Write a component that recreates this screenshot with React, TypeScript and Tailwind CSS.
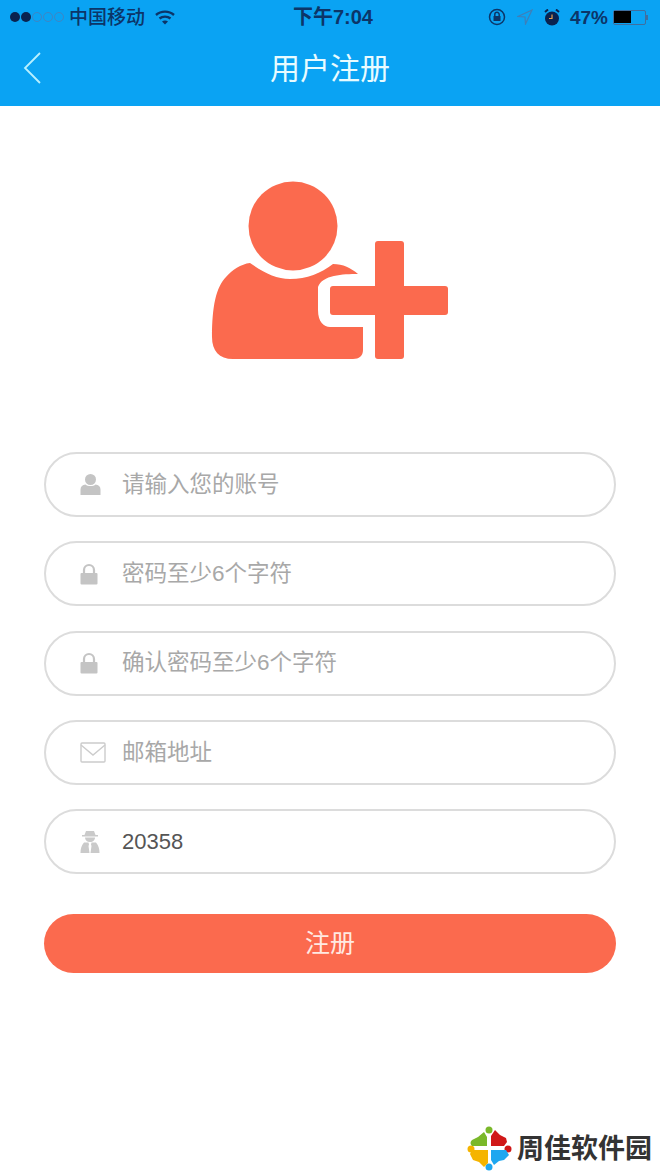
import React from "react";

const cjk = "font-['Liberation_Sans','Noto_Sans_CJK_SC',sans-serif]";

function UserIcon() {
  return (
    <svg width="21" height="23" viewBox="0 0 21 23" fill="#c4c4c4">
      <circle cx="10.500" cy="6.500" r="5.500" />
      <path d="M0.500 22v-5.500c0-3 2-4.500 5-5 2 2 8 2 10 0 3 .5 5 2 5 5v5.500z" />
    </svg>
  );
}
function LockIcon() {
  return (
    <svg width="18" height="22" viewBox="0 0 18 22">
      <path d="M4 11V7a5 5 0 0 1 10 0v4" fill="none" stroke="#c4c4c4" strokeWidth="2.200" />
      <rect x="0.500" y="10" width="17" height="11.500" rx="1" fill="#c4c4c4" />
    </svg>
  );
}
function MailIcon() {
  return (
    <svg width="26" height="21" viewBox="0 0 26 21" fill="none" stroke="#cccccc" strokeWidth="1.400">
      <rect x="1" y="1" width="24" height="19" rx="1" />
      <path d="M1 3l12 10L25 3" />
    </svg>
  );
}
function SpyIcon() {
  return (
    <svg width="20" height="24" viewBox="0 0 20 24" fill="#cacaca">
      <path d="M6 1h8l1.500 4H18v1.500H2V5h2.500z" />
      <path d="M5 7.500h10c0 2.500-2 4.500-5 4.500s-5-2-5-4.500z" />
      <path d="M4 12.500h4.500l.5 2-.5 1.500 1 7H0.500c0-4 1-8 3.500-10.500zM11.500 12.500H16c2.500 2.500 3.500 6.500 3.500 10.500h-9l1-7-.5-1.500z" />
    </svg>
  );
}

function Field({ icon, text, value }: { icon: React.ReactNode; text: string; value?: boolean }) {
  return (
    <div className="h-[65px] rounded-full border-2 border-[#dcdcdc] flex items-center bg-white">
      <div className="w-[76px] pl-[34px] flex items-center shrink-0">{icon}</div>
      <span className={`${value ? "text-[22px] text-[#555555]" : "text-[22.500px] text-[#a8a8a8] pt-[1px]"} leading-none ${cjk}`}>{text}</span>
    </div>
  );
}

function Logo() {
  return (
    <svg width="46" height="46" viewBox="466 1126 46 46">
      <circle cx="489" cy="1130" r="3.500" fill="#7ab82a" />
      <circle cx="471" cy="1149" r="3.500" fill="#f5b400" />
      <circle cx="508" cy="1149" r="3.500" fill="#d01818" />
      <circle cx="489" cy="1167" r="3.500" fill="#1ea7f0" />
      <path d="M487 1146H472c-2-2-2-4 0-6l6-3 6-5 3 5z" fill="#7ab82a" />
      <path d="M491 1146v-10l4-6 5 5 6 3 1 4-3 4z" fill="#d01818" />
      <path d="M488 1150H472l-2 4 3 6 6 2 5 5 4-4z" fill="#f5b400" />
      <path d="M491 1150h15l3 5-5 5-5 1-5 4-3-5z" fill="#1ea7f0" />
    </svg>
  );
}

function Dot({ on }: { on?: boolean }) {
  return <span className={`w-[10px] h-[10px] rounded-full ${on ? "bg-[#0a2350]" : "border border-[#3f86c4]"}`} />;
}

export default function App() {
  return (
    <div className={`w-[660px] h-[1174px] bg-white flex flex-col overflow-hidden ${cjk}`}>
      <header className="h-[106px] bg-[#0aa3f3] shrink-0 flex flex-col">
        <div className="h-[34px] grid grid-cols-3 items-center text-[#0c3568] px-[10px]">
          <div className="flex items-center">
            <div className="flex items-center gap-[1px] mr-[5px]">
              <Dot on />
              <Dot on />
              <Dot />
              <Dot />
              <Dot />
            </div>
            <span className="text-[19px] leading-none whitespace-nowrap font-medium">中国移动</span>
            <svg className="ml-[10px]" width="20" height="15" viewBox="0 0 20 15" fill="none" stroke="#0c3568" strokeWidth="2.400">
              <path d="M1 5c5-4.500 13-4.500 18 0" />
              <path d="M4.500 8.500c3-2.500 8-2.500 11 0" />
              <path d="M10 14.500l-3-3c1.500-1.200 4.500-1.200 6 0z" fill="#0c3568" stroke="none" />
            </svg>
          </div>
          <div className="text-center text-[20px] leading-none font-bold whitespace-nowrap pl-[6px]">下午7:04</div>
          <div className="flex items-center justify-end pr-[2px]">
            <svg width="18" height="18" viewBox="0 0 18 18" fill="none" stroke="#0c3568" strokeWidth="1.500" className="mr-[11px]">
              <circle cx="9" cy="9" r="7.500" />
              <rect x="5.500" y="8" width="7" height="5" fill="#0c3568" stroke="none" />
              <path d="M6.800 8V6.500a2.200 2.200 0 0 1 4.400 0V8" />
            </svg>
            <svg width="16" height="16" viewBox="0 0 16 16" fill="none" stroke="#3f7fb8" strokeWidth="1.200" className="mr-[11px]">
              <path d="M15 1L1 7.500l7 .5.500 7z" />
            </svg>
            <svg width="16" height="17" viewBox="0 0 16 17" className="mr-[10px]">
              <circle cx="8" cy="9.500" r="7" fill="#0a2350" />
              <path d="M1 3l3-2.500M15 3l-3-2.500" stroke="#0a2350" strokeWidth="2" />
              <path d="M8 5.500v4H5" stroke="#e8a050" strokeWidth="1.200" fill="none" />
            </svg>
            <span className="text-[19px] leading-none font-bold mr-[5px]">47%</span>
            <div className="w-[33px] h-[15px] border border-[#3f6f9f] rounded-[2px] flex p-[0.5px]">
              <div className="w-[17px] bg-black" />
            </div>
            <div className="w-[2px] h-[5px] bg-[#3f6f9f]" />
          </div>
        </div>
        <div className="relative flex-1 flex items-center justify-center pb-[2px]">
          <svg className="absolute left-[23px] top-[18px]" width="18" height="32" viewBox="0 0 18 32" fill="none" stroke="#b8f0ff" strokeWidth="1.800">
            <path d="M17 1L2 16l15 15" />
          </svg>
          <h1 className="text-[30px] leading-none text-[#e8fbff] font-normal">用户注册</h1>
        </div>
      </header>

      <div className="flex justify-center mt-[69px]">
        <svg width="250" height="190" viewBox="205 175 250 190" fill="#fb6a4e">
          <circle cx="293" cy="226" r="44.500" />
          <path d="M250 263c14 10 26 16 40 16 17 0 31-6 43-15 10 0 18 4 25 10-15 0-36 1-40 13v23c0 12 6 17 12 17h33v23c0 6-4 9-10 9H233c-14 0-21-8-21-22 0-30 4-50 14-60 6-7 15-13 24-14z" />
          <rect x="375" y="241" width="29" height="118" rx="3" />
          <rect x="330" y="286" width="118" height="29" rx="3" />
        </svg>
      </div>

      <div className="mt-[87px] mx-[44px] flex flex-col gap-[24.250px]">
        <Field icon={<UserIcon />} text="请输入您的账号" />
        <Field icon={<LockIcon />} text="密码至少6个字符" />
        <Field icon={<LockIcon />} text="确认密码至少6个字符" />
        <Field icon={<MailIcon />} text="邮箱地址" />
        <Field icon={<SpyIcon />} text="20358" value />
      </div>

      <button className="mt-[40px] mx-[44px] h-[59px] rounded-full bg-[#fb6a4e] text-[25px] leading-none text-[#ffe9e2]">注册</button>

      <div className="mt-auto mb-[2px] mr-[8px] flex items-center justify-end">
        <Logo />
        <span className="ml-[5px] text-[27px] leading-none font-bold text-[#333333] whitespace-nowrap">周佳软件园</span>
      </div>
    </div>
  );
}
